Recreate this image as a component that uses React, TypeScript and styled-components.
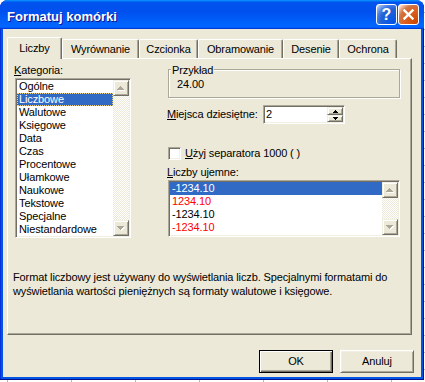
import React from "react";
import styled, { createGlobalStyle } from "styled-components";

const FACE = "#ECE9D8";
const SHADOW = "#ACA899";
const DARK = "#716F64";
const LIGHT = "#F1EFE2";

const GlobalStyle = createGlobalStyle`
  html, body { margin: 0; padding: 0; }
  body {
    width: 425px;
    height: 382px;
    overflow: hidden;
    background-color: #fff;
    background-image:
      linear-gradient(to right, #b8b8b8 1px, transparent 1px),
      linear-gradient(to bottom, #b8b8b8 1px, transparent 1px);
    background-size: 64px 17px;
    background-position: 7px 12px;
    font-family: "Liberation Sans", Arial, sans-serif;
    font-size: 11px;
    letter-spacing: -0.12px;
    color: #000;
  }
`;

const Window = styled.div`
  width: 424px;
  height: 380px;
  box-sizing: border-box;
  display: flex;
  flex-direction: column;
  background: #0055e5;
  border-radius: 8px 8px 0 0;
  box-shadow: inset -1px -1px #00138c, inset 1px 0 #0831d9;
  overflow: hidden;
`;

const TitleBar = styled.div`
  height: 29px;
  flex: none;
  display: flex;
  align-items: center;
  padding: 0 5px 0 7px;
  background: linear-gradient(
    180deg,
    #0997ff,
    #0053ee 8%,
    #0050ee 40%,
    #0066ff 88%,
    #0066ff 93%,
    #005bff 95%,
    #003dd7 96%,
    #003dd7
  );
`;

const Title = styled.div`
  flex: 1;
  padding-top: 4px;
  line-height: 15px;
  color: #fff;
  font-weight: bold;
  font-size: 13px;
  letter-spacing: 0;
  text-shadow: 1px 1px #0f1089;
  white-space: nowrap;
`;

const CaptionButton = styled.div<{ $kind: "help" | "close" }>`
  width: 21px;
  height: 21px;
  box-sizing: border-box;
  margin-left: 1px;
  border: 1px solid #fff;
  border-radius: 3px;
  display: flex;
  align-items: center;
  justify-content: center;
  color: #fff;
  font-weight: bold;
  font-size: 16px;
  line-height: 16px;
  letter-spacing: 0;
  background: ${(p) =>
    p.$kind === "help"
      ? "radial-gradient(circle at 90% 90%, #0054e9 0, #2263d5 55%, #4479e4 70%, #a3bbec 90%, #fff 100%)"
      : "radial-gradient(circle at 90% 90%, #cc4600 0, #dc6527 55%, #cd7546 70%, #ffccb2 90%, #fff 100%)"};
`;

const Body = styled.div`
  flex: 1;
  margin: 0 3px 3px;
  background: ${FACE};
  display: flex;
  flex-direction: column;
  padding: 8px 0 0 4px;
`;

const TabRow = styled.div`
  display: flex;
  align-items: flex-end;
  height: 21px;
`;

const Tab = styled.div<{ $w: number; $active?: boolean }>`
  width: ${(p) => p.$w}px;
  height: ${(p) => (p.$active ? 22 : 19)}px;
  margin-bottom: ${(p) => (p.$active ? -1 : 0)}px;
  padding-bottom: ${(p) => (p.$active ? 2 : 0)}px;
  box-sizing: border-box;
  background: ${FACE};
  border-top: 1px solid #fff;
  border-left: 1px solid #fff;
  border-right: 1px solid ${DARK};
  box-shadow: inset -1px 0 ${SHADOW};
  border-radius: 2px 2px 0 0;
  display: flex;
  align-items: center;
  justify-content: center;
  position: relative;
  z-index: ${(p) => (p.$active ? 2 : 0)};
  white-space: nowrap;
`;

const Panel = styled.div`
  width: 405px;
  height: 277px;
  box-sizing: border-box;
  background: ${FACE};
  border-top: 1px solid #fff;
  border-left: 1px solid #fff;
  border-right: 1px solid ${DARK};
  border-bottom: 1px solid ${DARK};
  box-shadow: inset -1px -1px ${SHADOW};
  position: relative;
  z-index: 1;
  padding-top: 5px;
  display: flex;
  flex-direction: column;
`;

const Columns = styled.div`
  display: flex;
  padding-left: 7px;
`;

const LeftCol = styled.div`
  width: 116px;
  display: flex;
  flex-direction: column;
`;

const RightCol = styled.div`
  width: 232px;
  margin-left: 37px;
  display: flex;
  flex-direction: column;
`;

const FieldLabel = styled.div<{ $top?: number }>`
  height: 13px;
  line-height: 13px;
  margin: ${(p) => p.$top ?? 0}px 0 1px -1px;
  white-space: nowrap;
`;

const ListBox = styled.div<{ $h: number }>`
  height: ${(p) => p.$h}px;
  box-sizing: border-box;
  background: #fff;
  border: 1px solid;
  border-color: ${SHADOW} #fff #fff ${SHADOW};
  box-shadow: inset 1px 1px ${DARK}, inset -1px -1px ${LIGHT};
  padding: 1px;
  display: flex;
`;

const Items = styled.div`
  flex: 1;
  overflow: hidden;
`;

const Item = styled.div<{ $selected?: boolean; $focus?: boolean; $red?: boolean }>`
  height: 13px;
  line-height: 13px;
  padding-left: 2px;
  box-sizing: border-box;
  white-space: nowrap;
  color: ${(p) => (p.$selected ? "#fff" : p.$red ? "#ff0000" : "#000")};
  background: ${(p) => (p.$selected ? "#316ac5" : "transparent")};
  outline: ${(p) => (p.$focus ? "1px dotted #e8d08a" : "none")};
  outline-offset: -1px;
`;

const ScrollBar = styled.div`
  width: 16px;
  display: flex;
  flex-direction: column;
`;

const RaisedBox = styled.div<{ $h: number }>`
  height: ${(p) => p.$h}px;
  flex: none;
  box-sizing: border-box;
  background: ${FACE};
  border: 1px solid;
  border-color: ${LIGHT} ${DARK} ${DARK} ${LIGHT};
  box-shadow: inset 1px 1px #fff, inset -1px -1px ${SHADOW};
  display: flex;
  align-items: center;
  justify-content: center;
`;

const Track = styled.div`
  flex: 1;
  background: repeating-conic-gradient(#fff 0 25%, ${FACE} 0 50%) 0 0 / 2px 2px;
`;

const Group = styled.div`
  position: relative;
  margin-top: 5px;
  height: 29px;
  box-sizing: border-box;
  border: 1px solid ${SHADOW};
  box-shadow: inset 1px 1px #fff, 1px 1px #fff;
  padding: 8px 0 0 8px;
  line-height: 13px;
`;

const Legend = styled.span`
  position: absolute;
  top: -6px;
  left: 2px;
  padding: 0 1px;
  line-height: 13px;
  background: ${FACE};
`;

const SpinRow = styled.div`
  display: flex;
  align-items: center;
  margin-top: 7px;
  height: 19px;
`;

const SpinLabel = styled.div`
  width: 96px;
  margin-left: -1px;
  line-height: 13px;
  white-space: nowrap;
`;

const SpinBox = styled.div`
  width: 82px;
  height: 19px;
  box-sizing: border-box;
  background: #fff;
  border: 1px solid;
  border-color: ${SHADOW} #fff #fff ${SHADOW};
  box-shadow: inset 1px 1px ${DARK}, inset -1px -1px ${LIGHT};
  padding: 1px;
  display: flex;
`;

const SpinValue = styled.div`
  flex: 1;
  padding-left: 1px;
  line-height: 15px;
`;

const SpinButtons = styled.div`
  width: 16px;
  display: flex;
  flex-direction: column;
`;

const CheckRow = styled.div`
  display: flex;
  align-items: center;
  gap: 4px;
  margin-top: 23px;
  height: 13px;
  line-height: 13px;
  white-space: nowrap;
`;

const CheckBox = styled.div`
  width: 13px;
  height: 13px;
  box-sizing: border-box;
  background: #fff;
  border: 1px solid;
  border-color: ${SHADOW} #fff #fff ${SHADOW};
  box-shadow: inset 1px 1px ${DARK}, inset -1px -1px ${LIGHT};
`;

const Description = styled.div`
  margin-top: 32px;
  padding-left: 5px;
  line-height: 14px;
  white-space: nowrap;
`;

const ButtonRow = styled.div`
  display: flex;
  justify-content: flex-end;
  gap: 7px;
  margin-top: 15px;
  padding-right: 7px;
`;

const PushButton = styled.div<{ $default?: boolean }>`
  width: 74px;
  height: 23px;
  box-sizing: border-box;
  background: ${FACE};
  display: flex;
  align-items: center;
  justify-content: center;
  line-height: 13px;
  border: 1px solid;
  border-color: ${(p) => (p.$default ? "#000" : `#fff ${DARK} ${DARK} #fff`)};
  box-shadow: ${(p) =>
    p.$default
      ? `inset 1px 1px #fff, inset -1px -1px ${DARK}, inset -2px -2px ${SHADOW}`
      : `inset 1px 1px ${LIGHT}, inset -1px -1px ${SHADOW}`};
`;

const UP7 = "M3 0h1v1h1v1h1v1h1v1H0V3h1V2h1V1h1z";
const DOWN7 = "M0 0h7v1H6v1H5v1H4v1H3V3H2V2H1V1H0z";
const UP5 = "M2 0h1v1h1v1h1v1H0V2h1V1h1z";
const DOWN5 = "M0 0h5v1H4v1H3v1H2V2H1V1H0z";

const ScrollArrow = ({ dir }: { dir: "up" | "down" }) => (
  <svg width="8" height="5" viewBox="0 0 8 5" shapeRendering="crispEdges">
    <path d={dir === "up" ? UP7 : DOWN7} fill="#fff" transform="translate(1 1)" />
    <path d={dir === "up" ? UP7 : DOWN7} fill={SHADOW} />
  </svg>
);

const SpinArrow = ({ dir }: { dir: "up" | "down" }) => (
  <svg width="5" height="3" viewBox="0 0 5 3" shapeRendering="crispEdges">
    <path d={dir === "up" ? UP5 : DOWN5} fill="#000" />
  </svg>
);

const VScroll = () => (
  <ScrollBar>
    <RaisedBox $h={16}>
      <ScrollArrow dir="up" />
    </RaisedBox>
    <Track />
    <RaisedBox $h={16}>
      <ScrollArrow dir="down" />
    </RaisedBox>
  </ScrollBar>
);

const categories = [
  "Ogólne",
  "Liczbowe",
  "Walutowe",
  "Księgowe",
  "Data",
  "Czas",
  "Procentowe",
  "Ułamkowe",
  "Naukowe",
  "Tekstowe",
  "Specjalne",
  "Niestandardowe",
];

const negatives = [
  { text: "-1234.10", red: false },
  { text: "1234.10", red: true },
  { text: "-1234.10", red: false },
  { text: "-1234.10", red: true },
];

const tabs = [
  { label: "Liczby", w: 55 },
  { label: "Wyrównanie", w: 77 },
  { label: "Czcionka", w: 59 },
  { label: "Obramowanie", w: 85 },
  { label: "Desenie", w: 56 },
  { label: "Ochrona", w: 58 },
];

export default function App() {
  return (
    <>
      <GlobalStyle />
      <Window>
        <TitleBar>
          <Title>Formatuj komórki</Title>
          <CaptionButton $kind="help">?</CaptionButton>
          <CaptionButton $kind="close">
            <svg width="11" height="11" viewBox="0 0 11 11">
              <path d="M1.5 1.5L9.5 9.5M9.5 1.5L1.5 9.5" stroke="#fff" strokeWidth="2.4" strokeLinecap="square" />
            </svg>
          </CaptionButton>
        </TitleBar>
        <Body>
          <TabRow>
            {tabs.map((t, i) => (
              <Tab key={t.label} $w={t.w} $active={i === 0}>
                {t.label}
              </Tab>
            ))}
          </TabRow>
          <Panel>
            <Columns>
              <LeftCol>
                <FieldLabel>
                  <u>K</u>ategoria:
                </FieldLabel>
                <ListBox $h={160}>
                  <Items>
                    {categories.map((c, i) => (
                      <Item key={c} $selected={i === 1} $focus={i === 1}>
                        {c}
                      </Item>
                    ))}
                  </Items>
                  <VScroll />
                </ListBox>
              </LeftCol>
              <RightCol>
                <Group>
                  <Legend>Przykład</Legend>
                  24.00
                </Group>
                <SpinRow>
                  <SpinLabel>
                    <u>M</u>iejsca dziesiętne:
                  </SpinLabel>
                  <SpinBox>
                    <SpinValue>2</SpinValue>
                    <SpinButtons>
                      <RaisedBox $h={8}>
                        <SpinArrow dir="up" />
                      </RaisedBox>
                      <RaisedBox $h={7}>
                        <SpinArrow dir="down" />
                      </RaisedBox>
                    </SpinButtons>
                  </SpinBox>
                </SpinRow>
                <CheckRow>
                  <CheckBox />
                  <span>
                    <u>U</u>żyj separatora 1000 ( )
                  </span>
                </CheckRow>
                <FieldLabel $top={6}>
                  <u>L</u>iczby ujemne:
                </FieldLabel>
                <ListBox $h={57}>
                  <Items>
                    {negatives.map((n, i) => (
                      <Item key={i} $selected={i === 0} $red={n.red}>
                        {n.text}
                      </Item>
                    ))}
                  </Items>
                  <VScroll />
                </ListBox>
              </RightCol>
            </Columns>
            <Description>
              Format liczbowy jest używany do wyświetlania liczb. Specjalnymi formatami do
              <br />
              wyświetlania wartości pieniężnych są formaty walutowe i księgowe.
            </Description>
          </Panel>
          <ButtonRow>
            <PushButton $default>OK</PushButton>
            <PushButton>Anuluj</PushButton>
          </ButtonRow>
        </Body>
      </Window>
    </>
  );
}
